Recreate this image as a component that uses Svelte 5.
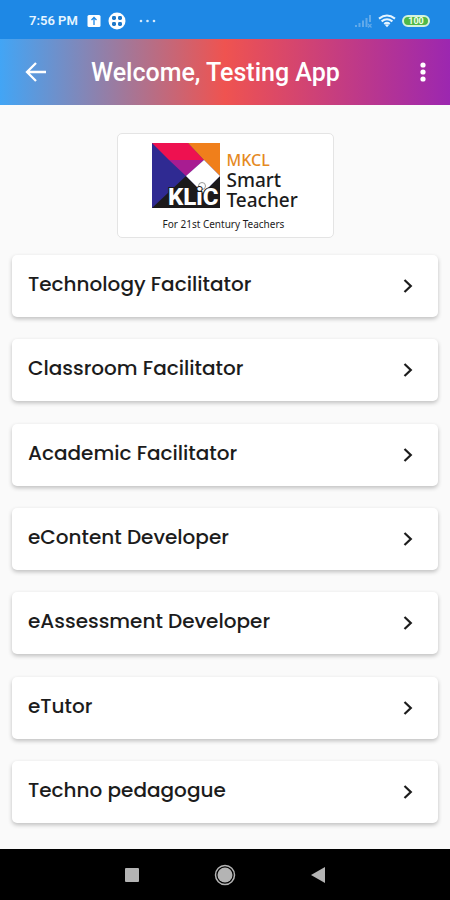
<script lang="ts">
  const roles = [
    'Technology Facilitator',
    'Classroom Facilitator',
    'Academic Facilitator',
    'eContent Developer',
    'eAssessment Developer',
    'eTutor',
    'Techno pedagogue'
  ];
</script>

<div class="screen">
  <div class="status-bar">
    <span class="time">7:56 PM</span>
    <svg class="upload" viewBox="0 0 14 14">
      <rect x="0.5" y="1" width="13" height="12" rx="1.5" fill="#fff" />
      <path d="M7 11V4M4.5 6L7 3.5L9.5 6" fill="none" stroke="#1e88e5" stroke-width="1.3" />
    </svg>
    <svg class="apps" viewBox="0 0 18 18">
      <circle cx="9" cy="9" r="8.5" fill="#fff" />
      <g fill="#1e78c8">
        <rect x="4" y="4" width="4" height="4" rx="1.4" />
        <rect x="10" y="4" width="4" height="4" rx="1.4" />
        <rect x="4" y="10" width="4" height="4" rx="1.4" />
        <rect x="10" y="10" width="4" height="4" rx="1.4" />
      </g>
    </svg>
    <svg class="dots" viewBox="0 0 18 4" fill="#d6eafb">
      <circle cx="3" cy="2" r="1.3" />
      <circle cx="9.5" cy="2" r="1.3" />
      <circle cx="16" cy="2" r="1.3" />
    </svg>
    <span class="spacer"></span>
    <svg class="signal" viewBox="0 0 18 14" stroke="#62aaea" stroke-width="2">
      <path d="M2 13V11M5.5 13V9M9 13V6.5M12.5 13V4M16 8V1" />
      <path d="M14 10L17.5 13.5M17.5 10L14 13.5" stroke-width="1.2" />
    </svg>
    <svg class="wifi" viewBox="0 0 18 14" fill="none" stroke="#e6f5ff" stroke-width="2">
      <path d="M1 4.6Q9 -1.6 17 4.6M3.6 7.4Q9 3 14.4 7.4M6.2 10Q9 7.8 11.8 10" />
      <path d="M7 11L9 13.2L11 11Q9 9.6 7 11Z" fill="#e6f5ff" stroke="none" />
    </svg>
    <span class="battery">100</span>
  </div>

  <header class="app-bar">
    <button class="icon-btn" aria-label="Back">
      <svg class="back" viewBox="0 0 22 20" fill="none" stroke="currentColor" stroke-width="2.3">
        <path d="M21 10H2.5M11 1L2 10L11 19" />
      </svg>
    </button>
    <h1>Welcome, Testing App</h1>
    <button class="icon-btn" aria-label="More options">
      <svg class="more" viewBox="0 0 6 20" fill="currentColor">
        <circle cx="3" cy="3" r="2.6" />
        <circle cx="3" cy="10" r="2.6" />
        <circle cx="3" cy="17" r="2.6" />
      </svg>
    </button>
  </header>

  <main>
    <div class="brand">
      <div class="brand-row">
        <svg class="klic" viewBox="0 0 68 65">
          <rect width="68" height="65" fill="#2f2a92" />
          <path d="M0 0H36L52 17H17Z" fill="#ee1150" />
          <path d="M17 17H52L34 33Z" fill="#a81c91" />
          <path d="M36 0H68V33L52 17Z" fill="#f07f1b" />
          <path d="M0 65L34 33L51 50L68 33V65Z" fill="#1c1a1b" />
          <path d="M52 17L68 33L51 50L34 33Z" fill="#fff" />
          <circle cx="50" cy="43" r="3.5" fill="none" stroke="#999" stroke-width="1" />
          <text x="16" y="62">KLiC</text>
        </svg>
        <div class="brand-name">
          <span class="mkcl">MKCL</span>
          <span>Smart</span>
          <span>Teacher</span>
        </div>
      </div>
      <p class="tagline">For 21st Century Teachers</p>
    </div>

    <ul class="roles">
      {#each roles as role}
        <li>
          <button class="role">
            <span>{role}</span>
            <svg class="chevron" viewBox="0 0 10 16" fill="none" stroke="currentColor" stroke-width="2.2">
              <path d="M1.5 2L7.8 8L1.5 14" />
            </svg>
          </button>
        </li>
      {/each}
    </ul>
  </main>

  <nav class="nav-bar">
    <button aria-label="Recent apps">
      <svg viewBox="0 0 22 22"><rect x="4" y="4" width="14" height="14" rx="1" fill="#b4b4b4" /></svg>
    </button>
    <button aria-label="Home">
      <svg viewBox="0 0 22 22">
        <circle cx="11" cy="11" r="9.5" fill="none" stroke="#b4b4b4" stroke-width="1.5" />
        <circle cx="11" cy="11" r="7.5" fill="#b4b4b4" />
      </svg>
    </button>
    <button aria-label="Back">
      <svg viewBox="0 0 22 22"><path d="M4 11L18 3V19Z" fill="#b4b4b4" /></svg>
    </button>
  </nav>
</div>

<style>
  :global(body) {
    margin: 0;
    background: #fafafa;
  }

  .screen {
    display: flex;
    flex-direction: column;
    min-height: 100vh;
    font-family: Roboto, sans-serif;
    color: #1c1c1c;
  }

  button {
    border: none;
    padding: 0;
    background: none;
    color: inherit;
    font: inherit;
    cursor: pointer;
  }

  svg {
    display: block;
    flex-shrink: 0;
  }

  .status-bar {
    display: flex;
    align-items: center;
    height: 39px;
    padding: 2px 20px 0 29px;
    box-sizing: border-box;
    background: #1e88e5;
    color: #e6f5ff;
  }

  .time {
    margin-right: 9px;
    font-size: 13px;
    font-weight: 600;
  }

  .upload {
    width: 14px;
    height: 14px;
    margin-right: 7px;
  }

  .apps {
    width: 18px;
    height: 18px;
    margin-right: 12px;
  }

  .dots {
    width: 18px;
    height: 4px;
  }

  .spacer {
    flex: 1;
  }

  .signal,
  .wifi {
    width: 18px;
    height: 14px;
    margin-right: 6px;
  }

  .battery {
    width: 28px;
    height: 12px;
    box-sizing: border-box;
    border: 2px solid #d4f2dc;
    border-radius: 6px;
    background: #4fb848;
    color: #f2ffe8;
    font-size: 9px;
    font-weight: 700;
    line-height: 8px;
    text-align: center;
  }

  .app-bar {
    display: flex;
    align-items: center;
    height: 66px;
    padding: 0 12px;
    background: linear-gradient(to right, #42a5f5, #ef5350 50%, #9c27b0);
    color: #fff;
  }

  h1 {
    flex: 1;
    margin: 0;
    padding: 2px 0 0 31px;
    font-size: 25px;
    font-weight: 500;
    line-height: 32px;
    white-space: nowrap;
  }

  .icon-btn {
    display: flex;
    align-items: center;
    justify-content: center;
    width: 48px;
    height: 48px;
  }

  .icon-btn:last-child {
    width: 30px;
  }

  .back {
    width: 22px;
    height: 20px;
  }

  .more {
    width: 6px;
    height: 20px;
  }

  main {
    display: flex;
    flex: 1;
    flex-direction: column;
    align-items: center;
    gap: 17px;
    padding: 28px 12px 26px;
  }

  .brand {
    width: 217px;
    box-sizing: border-box;
    padding: 9px 4px 6px 34px;
    border: 1px solid #e4e4e4;
    border-radius: 5px;
    background: #fff;
    font-family: "Noto Sans", "Open Sans", sans-serif;
  }

  .brand-row {
    display: flex;
    gap: 7px;
  }

  .klic {
    width: 68px;
    height: 65px;
    overflow: visible;
  }

  .klic text {
    fill: #fff;
    stroke: #1c1a1b;
    stroke-width: 2;
    paint-order: stroke;
    font-family: Roboto, sans-serif;
    font-size: 24px;
    font-weight: 800;
  }

  .brand-name {
    display: flex;
    flex-direction: column;
    padding-top: 7px;
    font-size: 19px;
    font-weight: 500;
    line-height: 20px;
  }

  .mkcl {
    color: #e58a1f;
    font-size: 16px;
  }

  .tagline {
    margin: 7px 0 0 11px;
    font-size: 10px;
    font-weight: 400;
    line-height: 14px;
    white-space: nowrap;
  }

  .roles {
    display: flex;
    flex: 1;
    flex-direction: column;
    justify-content: space-between;
    gap: 16px;
    width: 100%;
    margin: 0;
    padding: 0;
    list-style: none;
  }

  .role {
    display: flex;
    align-items: center;
    justify-content: space-between;
    width: 100%;
    height: 62px;
    padding: 0 25px 0 16px;
    border-radius: 5px;
    background: #fff;
    box-shadow: 0 2px 4px rgba(0, 0, 0, 0.24);
    font-family: Poppins, Inter, sans-serif;
    font-size: 20px;
    font-weight: 500;
    line-height: 26px;
    text-align: left;
  }

  .role span {
    padding-bottom: 4px;
  }

  .chevron {
    width: 10px;
    height: 16px;
  }

  .nav-bar {
    display: flex;
    align-items: center;
    justify-content: center;
    gap: 71px;
    height: 51px;
    background: #000;
  }

  .nav-bar svg {
    width: 22px;
    height: 22px;
  }
</style>
